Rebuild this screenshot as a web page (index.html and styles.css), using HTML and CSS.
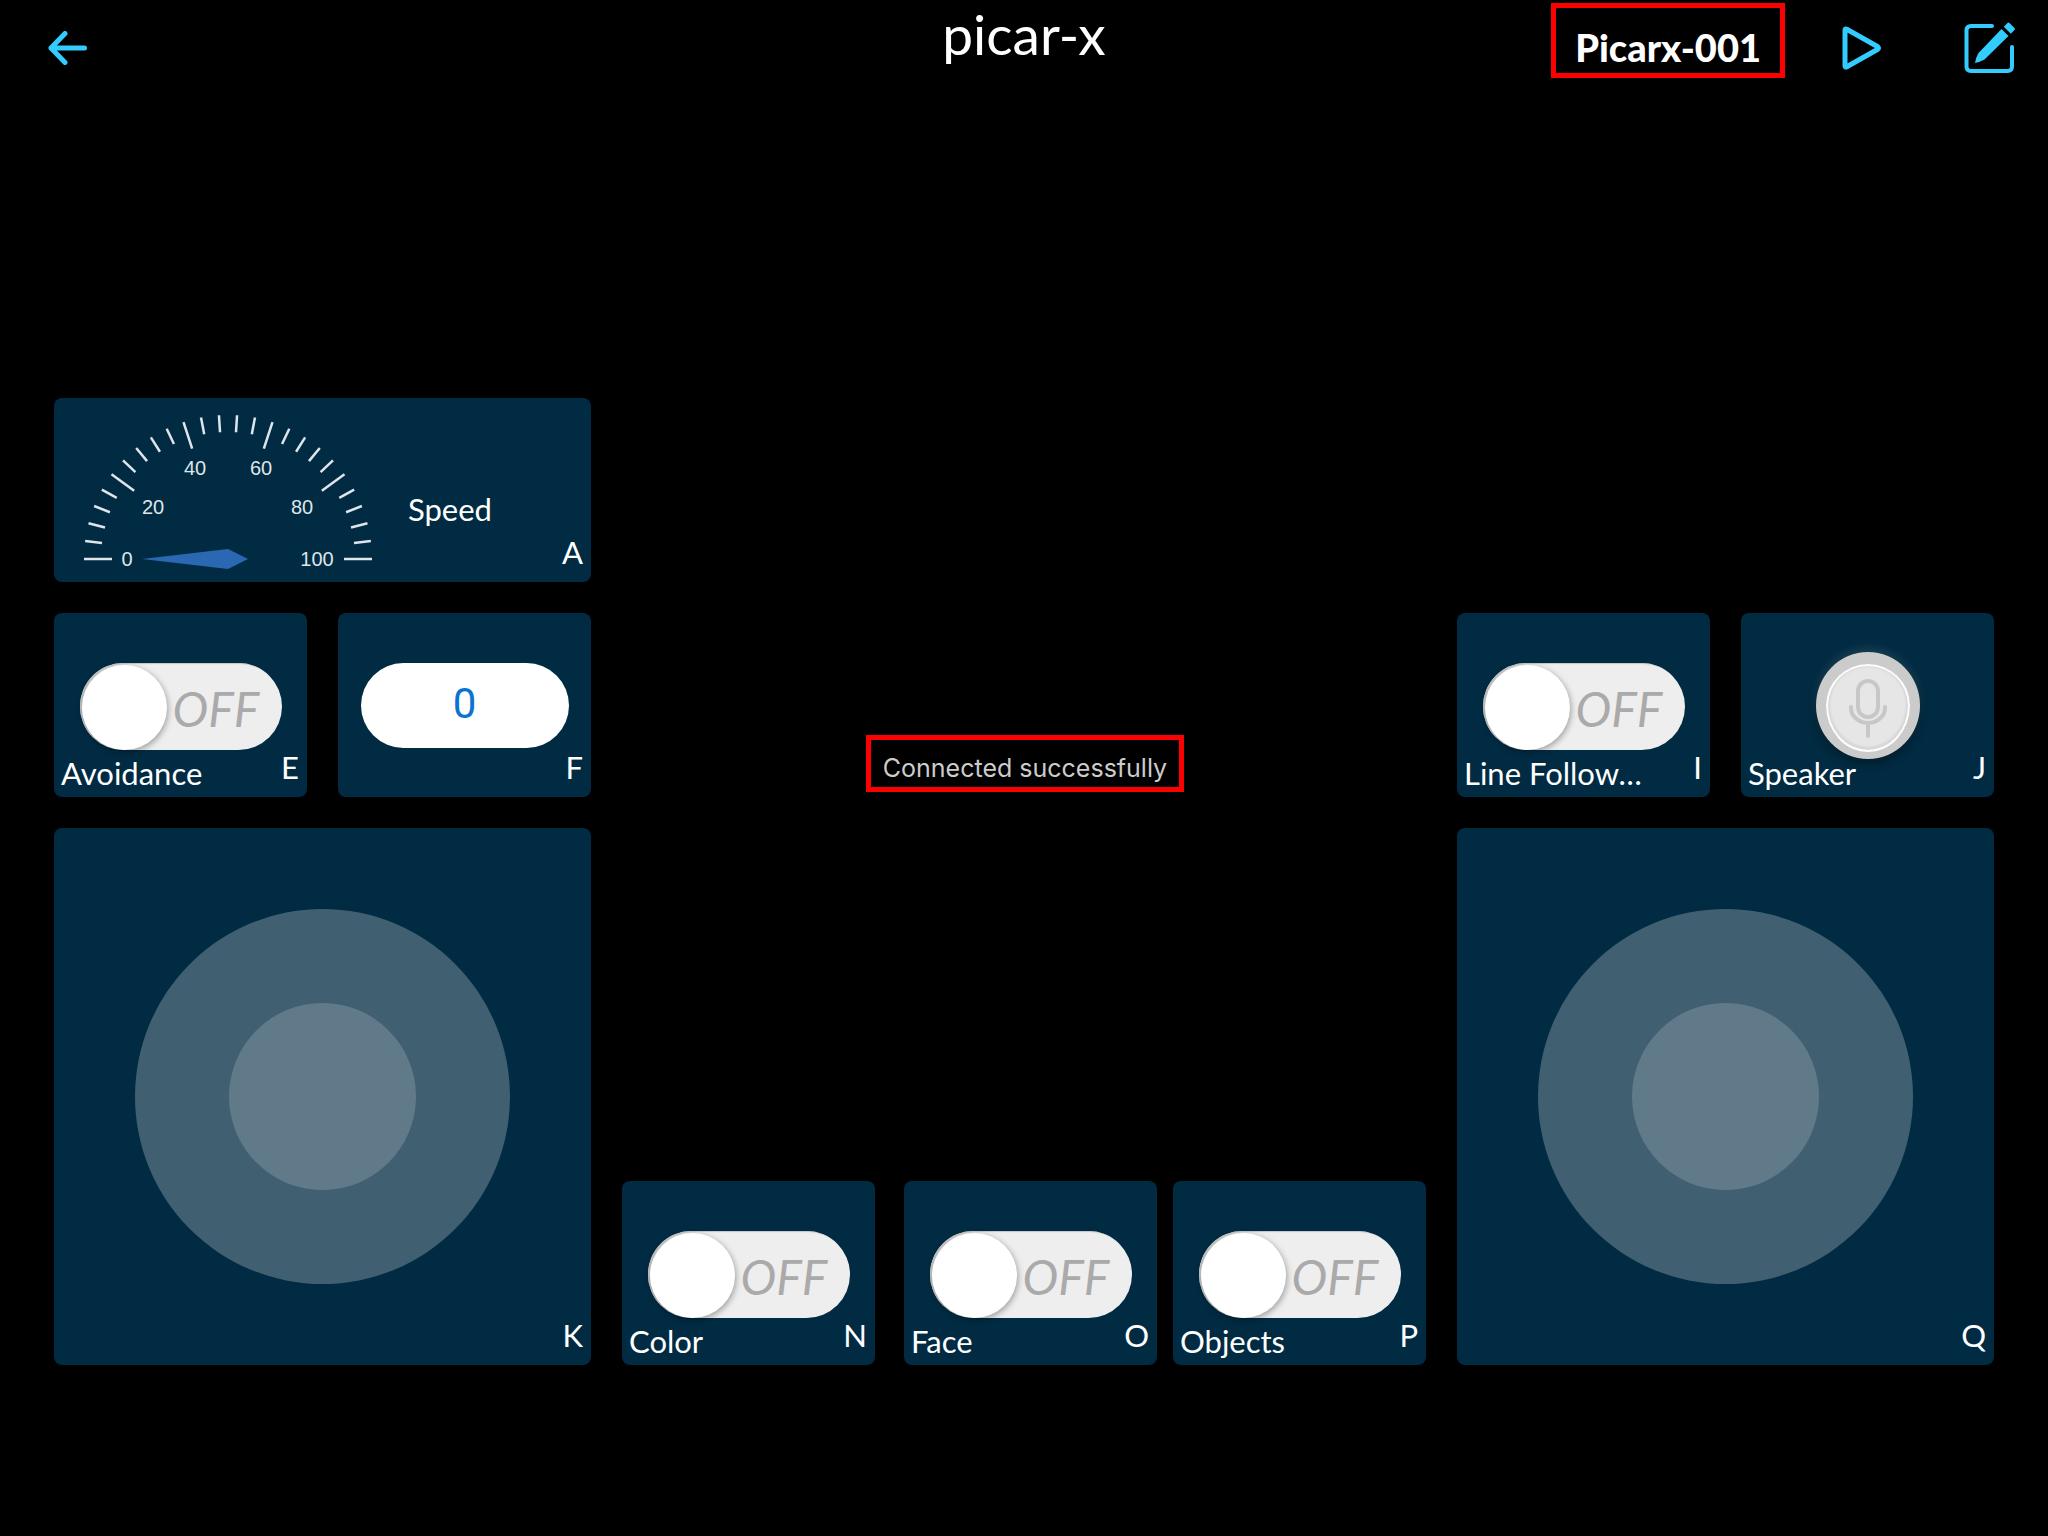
FILE: index.html
```html
<!DOCTYPE html>
<html lang="en">
<head>
<meta charset="utf-8">
<meta name="viewport" content="width=device-width, initial-scale=1">
<title>picar-x</title>
<link rel="stylesheet" href="styles.css">
</head>
<body>
<header class="topbar">
  <button class="icon-btn back" type="button" aria-label="Back">
    <svg width="40" height="34" viewBox="0 0 40 34" fill="none" stroke="currentColor" stroke-width="5" stroke-linecap="round" stroke-linejoin="round"><path d="M17 2.500L3 17l14 14.500M3 17h33.500"/></svg>
  </button>
  <h1 class="title">picar-x</h1>
  <div class="actions">
    <span class="device">Picarx-001</span>
    <button class="icon-btn" type="button" aria-label="Run">
      <svg width="40" height="44" viewBox="0 0 40 44" fill="none" stroke="currentColor" stroke-width="5" stroke-linejoin="round"><path d="M3 4.200Q3 2.300 4.800 3.300L35.800 20.800Q37.200 22 35.800 23.200L4.800 40.700Q3 41.700 3 39.800Z"/></svg>
    </button>
    <button class="icon-btn" type="button" aria-label="Edit">
      <svg width="52" height="52" viewBox="0 0 52 52"><path d="M28 4H7Q2.500 4 2.500 8.500V44.500Q2.500 49 7 49H43.500Q48 49 48 44.500V25" fill="none" stroke="currentColor" stroke-width="4" stroke-linecap="round"/><path d="M37.500 7L44.500 14L20.500 37.500Q15 40.500 11 41Q11.500 36 14.500 31Z" fill="currentColor"/><path d="M39.800 4.800L43.500 1Q44.500 0 45.500 1L50.500 6Q51.500 7 50.500 8L46.800 11.800Z" fill="currentColor"/></svg>
    </button>
  </div>
</header>

<main class="panel">
  <section class="side" aria-label="Left controls">
    <div class="card">
      <div class="gauge-row">
        <svg class="gauge" width="330" height="184" viewBox="0 0 330 184" role="img" aria-label="Speed gauge, 0 of 100">
          <defs>
            <path id="major" d="M-144 0h28"/>
            <path id="minor" d="M-144 0h17"/>
          </defs>
          <g class="ticks" transform="translate(174 161)">
            <use href="#major"/>
            <use href="#minor" transform="rotate(7.200)"/>
            <use href="#minor" transform="rotate(14.400)"/>
            <use href="#minor" transform="rotate(21.600)"/>
            <use href="#minor" transform="rotate(28.800)"/>
            <use href="#major" transform="rotate(36)"/>
            <use href="#minor" transform="rotate(43.200)"/>
            <use href="#minor" transform="rotate(50.400)"/>
            <use href="#minor" transform="rotate(57.600)"/>
            <use href="#minor" transform="rotate(64.800)"/>
            <use href="#major" transform="rotate(72)"/>
            <use href="#minor" transform="rotate(79.200)"/>
            <use href="#minor" transform="rotate(86.400)"/>
            <use href="#minor" transform="rotate(93.600)"/>
            <use href="#minor" transform="rotate(100.800)"/>
            <use href="#major" transform="rotate(108)"/>
            <use href="#minor" transform="rotate(115.200)"/>
            <use href="#minor" transform="rotate(122.400)"/>
            <use href="#minor" transform="rotate(129.600)"/>
            <use href="#minor" transform="rotate(136.800)"/>
            <use href="#major" transform="rotate(144)"/>
            <use href="#minor" transform="rotate(151.200)"/>
            <use href="#minor" transform="rotate(158.400)"/>
            <use href="#minor" transform="rotate(165.600)"/>
            <use href="#minor" transform="rotate(172.800)"/>
            <use href="#major" transform="rotate(180)"/>
          </g>
          <path class="needle" d="M88 161L174 151L194 161L174 171Z"/>
          <g class="scale">
            <text x="73" y="168">0</text>
            <text x="99" y="116">20</text>
            <text x="141" y="77">40</text>
            <text x="207" y="77">60</text>
            <text x="248" y="116">80</text>
            <text x="263" y="168">100</text>
          </g>
        </svg>
        <span class="name">Speed</span>
      </div>
      <div class="foot"><span class="key">A</span></div>
    </div>
    <div class="pair">
      <div class="card">
        <label class="toggle"><input type="checkbox" aria-labelledby="n-e"><span class="state">OFF</span></label>
        <div class="foot"><span class="name" id="n-e">Avoidance</span><span class="key">E</span></div>
      </div>
      <div class="card">
        <output class="value">0</output>
        <div class="foot"><span class="key">F</span></div>
      </div>
    </div>
    <div class="card square">
      <div class="stick"><button class="thumb" type="button" aria-label="Joystick K"></button></div>
      <div class="foot"><span class="key">K</span></div>
    </div>
  </section>

  <section class="middle" aria-label="Detection controls">
    <div class="status-area"><p class="status" role="status">Connected successfully</p></div>
    <div class="trio">
      <div class="card">
        <label class="toggle"><input type="checkbox" aria-labelledby="n-n"><span class="state">OFF</span></label>
        <div class="foot"><span class="name" id="n-n">Color</span><span class="key">N</span></div>
      </div>
      <div class="card">
        <label class="toggle"><input type="checkbox" aria-labelledby="n-o"><span class="state">OFF</span></label>
        <div class="foot"><span class="name" id="n-o">Face</span><span class="key">O</span></div>
      </div>
      <div class="card">
        <label class="toggle"><input type="checkbox" aria-labelledby="n-p"><span class="state">OFF</span></label>
        <div class="foot"><span class="name" id="n-p">Objects</span><span class="key">P</span></div>
      </div>
    </div>
  </section>

  <section class="side" aria-label="Right controls">
    <div class="pair">
      <div class="card">
        <label class="toggle"><input type="checkbox" aria-labelledby="n-i"><span class="state">OFF</span></label>
        <div class="foot"><span class="name" id="n-i">Line Follow…</span><span class="key">I</span></div>
      </div>
      <div class="card">
        <button class="mic" type="button" aria-labelledby="n-j">
          <svg width="38" height="60" viewBox="0 0 38 60" fill="none" stroke="currentColor" stroke-width="4" stroke-linecap="round"><rect x="9" y="3" width="20" height="36" rx="10"/><path d="M2 29v1a17 15 0 0 0 34 0v-1M19 45v13"/></svg>
        </button>
        <div class="foot"><span class="name" id="n-j">Speaker</span><span class="key">J</span></div>
      </div>
    </div>
    <div class="card square">
      <div class="stick"><button class="thumb" type="button" aria-label="Joystick Q"></button></div>
      <div class="foot"><span class="key">Q</span></div>
    </div>
  </section>
</main>
</body>
</html>
```
FILE: styles.css
```css
* {
  box-sizing: border-box;
}

body {
  margin: 0;
  min-height: 100vh;
  display: flex;
  flex-direction: column;
  background: #000;
  color: #fff;
  font-family: Lato, "Open Sans", sans-serif;
}

button {
  padding: 0;
  border: 0;
  background: none;
  font: inherit;
}

svg {
  display: block;
}

/* Top bar */
.topbar {
  display: grid;
  grid-template-columns: 1fr auto 1fr;
  height: 96px;
  padding: 0 32px;
}

.icon-btn {
  color: #3cf;
}

.back {
  justify-self: start;
  margin-left: 16px;
}

.title {
  margin: 0;
  font-size: 55px;
  font-weight: 400;
  line-height: 68px;
}

.actions {
  display: flex;
  justify-content: flex-end;
}

.device {
  align-self: flex-start;
  margin: 3px 57px 0 0;
  padding: 15px 19px 2px;
  border: 5px solid #f00;
  font-size: 38px;
  font-weight: 900;
  line-height: 48px;
}

.actions .icon-btn + .icon-btn {
  margin-left: 82px;
}

/* Control panel */
.panel {
  flex: 1;
  display: grid;
  grid-template-columns: minmax(0, 537fr) minmax(0, 804fr) minmax(0, 537fr);
  gap: 31px;
  align-content: end;
  padding: 0 54px 171px;
}

.side,
.middle {
  display: flex;
  flex-direction: column;
  justify-content: flex-end;
  gap: 31px;
}

.pair {
  display: grid;
  grid-template-columns: 1fr 1fr;
  gap: 31px;
}

.trio {
  display: grid;
  grid-template-columns: 253fr 29fr 253fr 16fr 253fr;
}

.trio .card:nth-child(2) {
  grid-column: 3;
}

.trio .card:nth-child(3) {
  grid-column: 5;
}

.card {
  display: grid;
  min-height: 184px;
  border-radius: 8px;
  background: #002b42;
}

.card > * {
  grid-area: 1 / 1;
}

.square {
  aspect-ratio: 1;
}

.foot {
  align-self: end;
  display: flex;
  align-items: flex-end;
  padding: 0 8px 6px 7px;
  pointer-events: none;
}

.name,
.key {
  font-size: 31px;
  line-height: 36px;
}

.key {
  margin-left: auto;
  padding-bottom: 6px;
}

/* Gauge */
.gauge-row {
  display: flex;
  align-items: center;
  gap: 24px;
}

.gauge-row .name {
  padding-top: 38px;
}

.ticks {
  stroke: #dfe5ea;
  stroke-width: 2.500;
}

.needle {
  fill: #2b68b4;
}

.scale {
  fill: #dfe5e9;
  font: 20px "Liberation Sans", Arial, sans-serif;
  text-anchor: middle;
}

/* Switch */
.toggle {
  place-self: center;
  display: flex;
  align-items: center;
  width: 202px;
  height: 87px;
  margin-top: 2px;
  padding: 2px 0 0 2px;
  border-radius: 44px;
  background: #eee;
  box-shadow: inset 2px 1px 1px #c4c4c4;
}

.toggle input {
  appearance: none;
  flex: none;
  width: 85px;
  height: 85px;
  margin: 0;
  border-radius: 50%;
  background: #fff;
  box-shadow: 1px 2px 6px rgba(0, 0, 0, 0.35);
}

.state {
  padding: 4px 0 0 6px;
  color: #aaa;
  font-size: 48px;
  font-style: italic;
  font-weight: 400;
  line-height: 56px;
}

.value {
  place-self: center;
  width: 208px;
  height: 85px;
  border-radius: 43px;
  background: #fff;
  color: #0a73d0;
  font-family: Roboto, sans-serif;
  font-size: 42px;
  font-weight: 400;
  line-height: 82px;
  text-align: center;
}

/* Speaker */
.mic {
  place-self: center;
  display: grid;
  place-items: center;
  width: 104px;
  height: 107px;
  border: solid #cbcbcb;
  border-width: 12px 10px 7px;
  border-radius: 50%;
  background: #e6e6e6;
  color: #c8c6c6;
  box-shadow: inset 0 0 1px 2px #fff, inset 0 -1px 2px 4px #d6d6d6, 0 -4px 10px rgba(255, 255, 255, 0.1), 0 4px 10px rgba(0, 0, 0, 0.4);
}

/* Joystick */
.stick {
  place-self: center;
  display: grid;
  place-items: center;
  width: 70%;
  aspect-ratio: 1;
  border-radius: 50%;
  background: rgba(255, 255, 255, 0.25);
}

.thumb {
  width: 50%;
  aspect-ratio: 1;
  border-radius: 50%;
  background: rgba(245, 245, 255, 0.18);
}

/* Connection status */
.status-area {
  flex: 1;
  display: grid;
  place-items: center;
  padding: 0 0 22px 2px;
}

.status {
  margin: 0;
  padding: 12px 12px 3px;
  border: 5px solid #f00;
  color: #ccc;
  font-family: Inter, "Noto Sans", sans-serif;
  font-size: 25px;
  line-height: 32px;
}
```
